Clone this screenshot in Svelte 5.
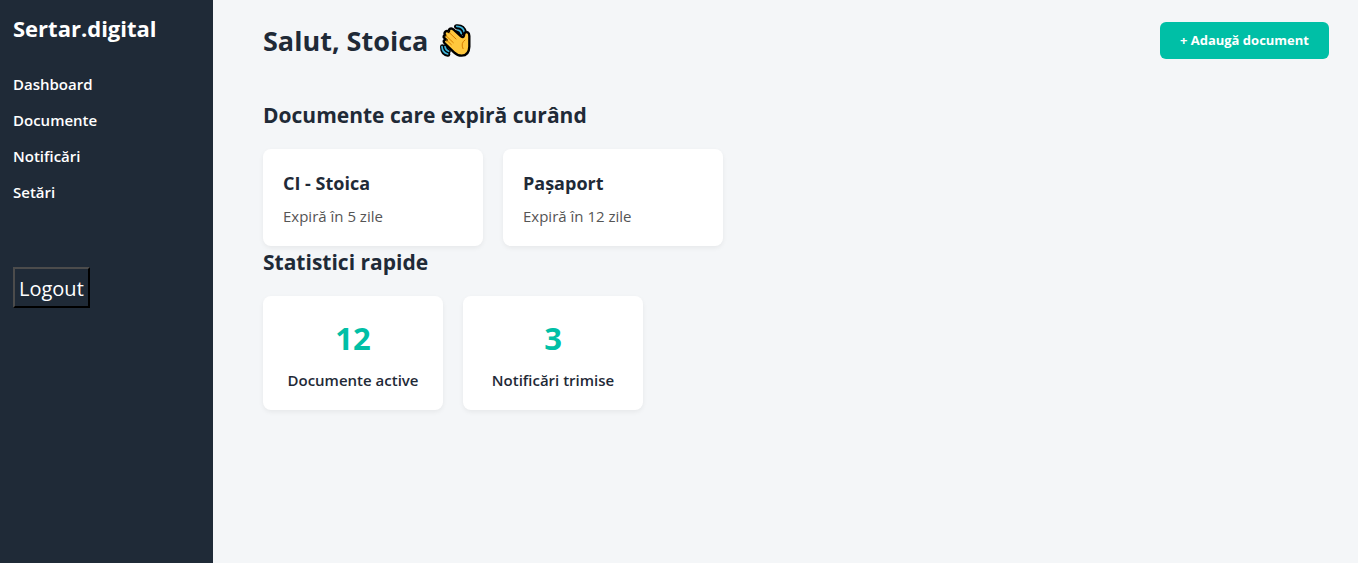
<script>
  const links = ['Dashboard', 'Documente', 'Notificări', 'Setări'];
  const expiring = [
    { title: 'CI - Stoica', days: 5 },
    { title: 'Pașaport', days: 12 }
  ];
  const stats = [
    { value: 12, label: 'Documente active' },
    { value: 3, label: 'Notificări trimise' }
  ];
</script>

<div class="layout">
  <aside>
    <h2 class="brand">Sertar.digital</h2>
    <nav>
      {#each links as link}
        <a href="#{link}">{link}</a>
      {/each}
    </nav>
    <button class="logout" type="button">Logout</button>
  </aside>

  <main>
    <header>
      <h1>
        Salut, Stoica
        <svg class="wave" viewBox="33 30 93 99" role="img" aria-label="👋">
          <g fill="none" stroke-linecap="round" stroke-linejoin="round">
            <path d="M82 38Q103 36 107 56M89 49Q94 51 96 59M40 98Q40 118 57 121M49 99Q51 107 58 112" stroke="#000" stroke-width="14" />
            <path d="M83 37Q102 37 106 54M86 48Q95 49 97 59M39 98Q40 116 56 120M48 98Q50 109 59 112" stroke="#3fb5dc" stroke-width="5" />
          </g>
          <path d="M49 64Q44 58 49 53Q54 49 60 54Q58 47 64 44Q69 42 74 47L96 67Q103 72 105 65L106 59Q109 52 116 55Q121 58 121 66L121 98Q120 125 98 125Q85 125 75 115L47 88Q42 82 46 78Q49 75 53 78L44 70Q43 63 49 64Z" fill="#ffc83d" stroke="#000" stroke-width="7" stroke-linejoin="round" />
          <path d="M60 55L81 75M51 65L73 86M52 78L67 92M108 78Q94 87 102 104" fill="none" stroke="#d67d00" stroke-width="3" stroke-linecap="round" />
        </svg>
      </h1>
      <button class="add" type="button">+ Adaugă document</button>
    </header>

    <section>
      <h2>Documente care expiră curând</h2>
      <div class="cards">
        {#each expiring as doc}
          <article class="card doc">
            <h3>{doc.title}</h3>
            <p>Expiră în {doc.days} zile</p>
          </article>
        {/each}
      </div>
    </section>

    <section>
      <h2>Statistici rapide</h2>
      <div class="cards">
        {#each stats as stat}
          <article class="card stat">
            <strong>{stat.value}</strong>
            <p>{stat.label}</p>
          </article>
        {/each}
      </div>
    </section>
  </main>
</div>

<style>
  :global(body) {
    margin: 0;
    background: #f4f6f8;
    color: #1f2a37;
    font-family: "Segoe UI", "Open Sans", "Noto Sans", sans-serif;
  }
  * {
    box-sizing: border-box;
  }
  h1, h2, h3, p {
    margin: 0;
  }
  .layout {
    display: flex;
    min-height: 100vh;
  }
  aside {
    flex: none;
    width: 213px;
    padding: 12px;
    padding-left: 13px;
    background: #1f2a37;
    color: #fff;
  }
  .brand {
    font-size: 22px;
    line-height: 32px;
  }
  nav {
    display: flex;
    flex-direction: column;
    align-items: flex-start;
    gap: 12px;
    margin-top: 28px;
  }
  nav a {
    color: #fff;
    font-size: 15px;
    font-weight: 600;
    line-height: 24px;
    text-decoration: none;
  }
  .logout {
    margin-top: 63px;
    padding: 5px 4px 3px;
    border: 2px solid;
    border-color: #4c4c4c #000 #000 #4c4c4c;
    background: transparent;
    color: #fff;
    font-family: inherit;
    font-size: 20px;
    line-height: 29px;
  }
  main {
    flex: 1;
    padding: 20px 29px 20px 50px;
  }
  header {
    display: flex;
    align-items: center;
    justify-content: space-between;
    margin-bottom: 40px;
  }
  h1 {
    display: flex;
    align-items: center;
    gap: 12px;
    font-size: 27px;
    line-height: 41px;
  }
  .wave {
    width: 31px;
    height: 33px;
  }
  .add {
    padding: 10px 20px;
    border: 0;
    border-radius: 6px;
    background: #00bfa6;
    color: #fff;
    font-family: inherit;
    font-size: 13px;
    font-weight: 700;
    line-height: 17px;
  }
  section h2 {
    margin-bottom: 20px;
    font-size: 21px;
    line-height: 28px;
  }
  section + section h2 {
    padding-top: 2px;
  }
  .cards {
    display: flex;
    flex-wrap: wrap;
    gap: 20px;
  }
  .card {
    padding: 20px;
    border-radius: 8px;
    background: #fff;
    box-shadow: 0 2px 5px rgba(0, 0, 0, 0.06);
  }
  .doc {
    width: 220px;
  }
  .doc h3 {
    margin-bottom: 9px;
    font-size: 18px;
    line-height: 28px;
  }
  .doc p {
    color: #555;
    font-size: 15px;
    line-height: 20px;
  }
  .stat {
    width: 180px;
    text-align: center;
  }
  .stat strong {
    display: block;
    margin-bottom: 9px;
    color: #00bfa6;
    font-size: 31px;
    line-height: 45px;
  }
  .stat p {
    font-size: 15px;
    font-weight: 600;
    line-height: 20px;
    white-space: nowrap;
  }
</style>
